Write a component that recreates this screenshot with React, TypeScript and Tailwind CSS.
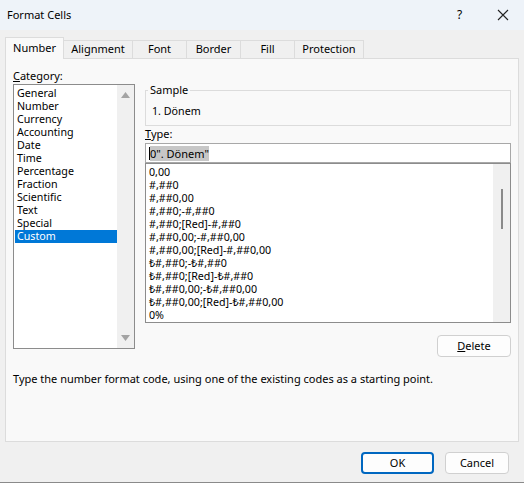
import React from "react";

const categories = [
  "General",
  "Number",
  "Currency",
  "Accounting",
  "Date",
  "Time",
  "Percentage",
  "Fraction",
  "Scientific",
  "Text",
  "Special",
  "Custom",
];

const formats = [
  "0,00",
  "#,##0",
  "#,##0,00",
  "#,##0;-#,##0",
  "#,##0;[Red]-#,##0",
  "#,##0,00;-#,##0,00",
  "#,##0,00;[Red]-#,##0,00",
  "₺#,##0;-₺#,##0",
  "₺#,##0;[Red]-₺#,##0",
  "₺#,##0,00;-₺#,##0,00",
  "₺#,##0,00;[Red]-₺#,##0,00",
  "0%",
];

const tabs = ["Number", "Alignment", "Font", "Border", "Fill", "Protection"];
const tabWidths = ["w-[59px]", "w-[69px]", "w-[54px]", "w-[54px]", "w-[54px]", "w-[69px]"];

export default function App() {
  return (
    <div
      className="w-[524px] h-[483px] bg-[#f0f0f0] flex flex-col text-black border-b border-[#8a8a8a] overflow-hidden"
      style={{ fontFamily: '"Segoe UI", "Noto Sans", "Liberation Sans", sans-serif' }}
    >
      {/* Title bar */}
      <div className="h-[30px] bg-[#eef3f9] flex items-center justify-between pl-[7px] shrink-0">
        <span className="text-[11px]">Format Cells</span>
        <div className="flex items-center h-full">
          <span className="w-[45px] text-center text-[12px]">?</span>
          <span className="w-[42px] flex items-center justify-center">
            <svg width="12" height="12" viewBox="0 0 12 12">
              <path d="M1 1 L11 11 M11 1 L1 11" stroke="#222" strokeWidth="1.1" />
            </svg>
          </span>
        </div>
      </div>

      {/* Tabs */}
      <div className="px-[5px] pt-[7px] flex flex-col">
        <div className="flex items-end h-[21px] relative z-10">
          {tabs.map((t, i) =>
            i === 0 ? (
              <div
                key={t}
                className={`${tabWidths[i]} h-[22px] bg-[#f9f9f9] border border-b-0 border-[#dcdcdc] flex items-center justify-center text-[11px] -mb-px`}
              >
                {t}
              </div>
            ) : (
              <div
                key={t}
                className={`${tabWidths[i]} h-[18px] bg-[#f0f0f0] border border-l-0 border-b-0 border-[#dcdcdc] flex items-center justify-center text-[11px]`}
              >
                {t}
              </div>
            )
          )}
        </div>

        {/* Panel */}
        <div className="h-[384px] bg-[#f9f9f9] border border-[#dcdcdc] flex flex-col pl-[7px] pr-[5px] pt-[9px]">
          <div className="flex gap-[10px]">
            {/* Left column */}
            <div className="flex flex-col w-[122px]">
              <div className="text-[11px] leading-[15px] h-[16px]">
                <span className="underline">C</span>ategory:
              </div>
              <div className="h-[265px] border border-[#8c8c8c] bg-white flex">
                <div className="flex-1 flex flex-col pt-[2px] pl-[1px]">
                  {categories.map((c) => (
                    <div
                      key={c}
                      className={`h-[13px] leading-[13px] text-[10.7px] pl-[2px] ${
                        c === "Custom" ? "bg-[#0078d7] text-white" : ""
                      }`}
                    >
                      {c}
                    </div>
                  ))}
                </div>
                <div className="w-[17px] bg-[#f0f0f0] flex flex-col justify-between items-center py-[7px]">
                  <svg width="9" height="6" viewBox="0 0 9 6">
                    <path d="M0 6 L4.5 0 L9 6 Z" fill="#a3a3a3" />
                  </svg>
                  <svg width="9" height="6" viewBox="0 0 9 6">
                    <path d="M0 0 L9 0 L4.5 6 Z" fill="#a3a3a3" />
                  </svg>
                </div>
              </div>
            </div>

            {/* Right column */}
            <div className="flex flex-col w-[366px]">
              <div className="relative border border-[#dcdcdc] h-[36px] mt-[22px] pl-[6px] pt-[13px]">
                <span className="absolute -top-[8px] left-[2px] bg-[#f9f9f9] px-[2px] text-[11px] leading-[14px]">
                  Sample
                </span>
                <div className="text-[10.7px] leading-[14px]">1. Dönem</div>
              </div>

              <div className="text-[11px] leading-[15px] h-[15px]">
                <span className="underline">T</span>ype:
              </div>
              <div className="h-[20px] mt-[2px] border border-[#a8a8a8] bg-white flex items-center pl-[3px]">
                <span className="w-px h-[13px] bg-black"></span>
                <span className="bg-[#c7c7c7] text-[11px] leading-[15px]">0". Dönem"</span>
              </div>
              <div className="h-[160px] border border-[#8c8c8c] bg-white flex">
                <div className="flex-1 flex flex-col pt-[2px] pl-[3px]">
                  {formats.map((f) => (
                    <div key={f} className="h-[13px] leading-[13px] text-[10.7px] whitespace-nowrap">
                      {f}
                    </div>
                  ))}
                </div>
                <div className="w-[17px] bg-[#f0f0f0] flex justify-center pt-[25px]">
                  <div className="w-[2px] h-[40px] bg-[#8a8a8a]"></div>
                </div>
              </div>
              <div className="flex justify-end mt-[12px]">
                <button className="w-[74px] h-[22px] border border-[#d0d0d0] rounded-[4px] bg-[#fdfdfd] text-[11px]">
                  <span className="underline">D</span>elete
                </button>
              </div>
            </div>
          </div>

          <div className="text-[11px] leading-[15px] mt-[14px]">
            Type the number format code, using one of the existing codes as a starting point.
          </div>
        </div>
      </div>

      {/* Buttons */}
      <div className="flex justify-end gap-[11px] pr-[15px] pt-[10px]">
        <button className="w-[73px] h-[22px] border-2 border-[#0067c0] rounded-[4px] bg-[#fdfdfd] text-[11px]">
          OK
        </button>
        <button className="w-[64px] h-[22px] border border-[#d0d0d0] rounded-[4px] bg-[#fdfdfd] text-[11px]">
          Cancel
        </button>
      </div>
    </div>
  );
}
